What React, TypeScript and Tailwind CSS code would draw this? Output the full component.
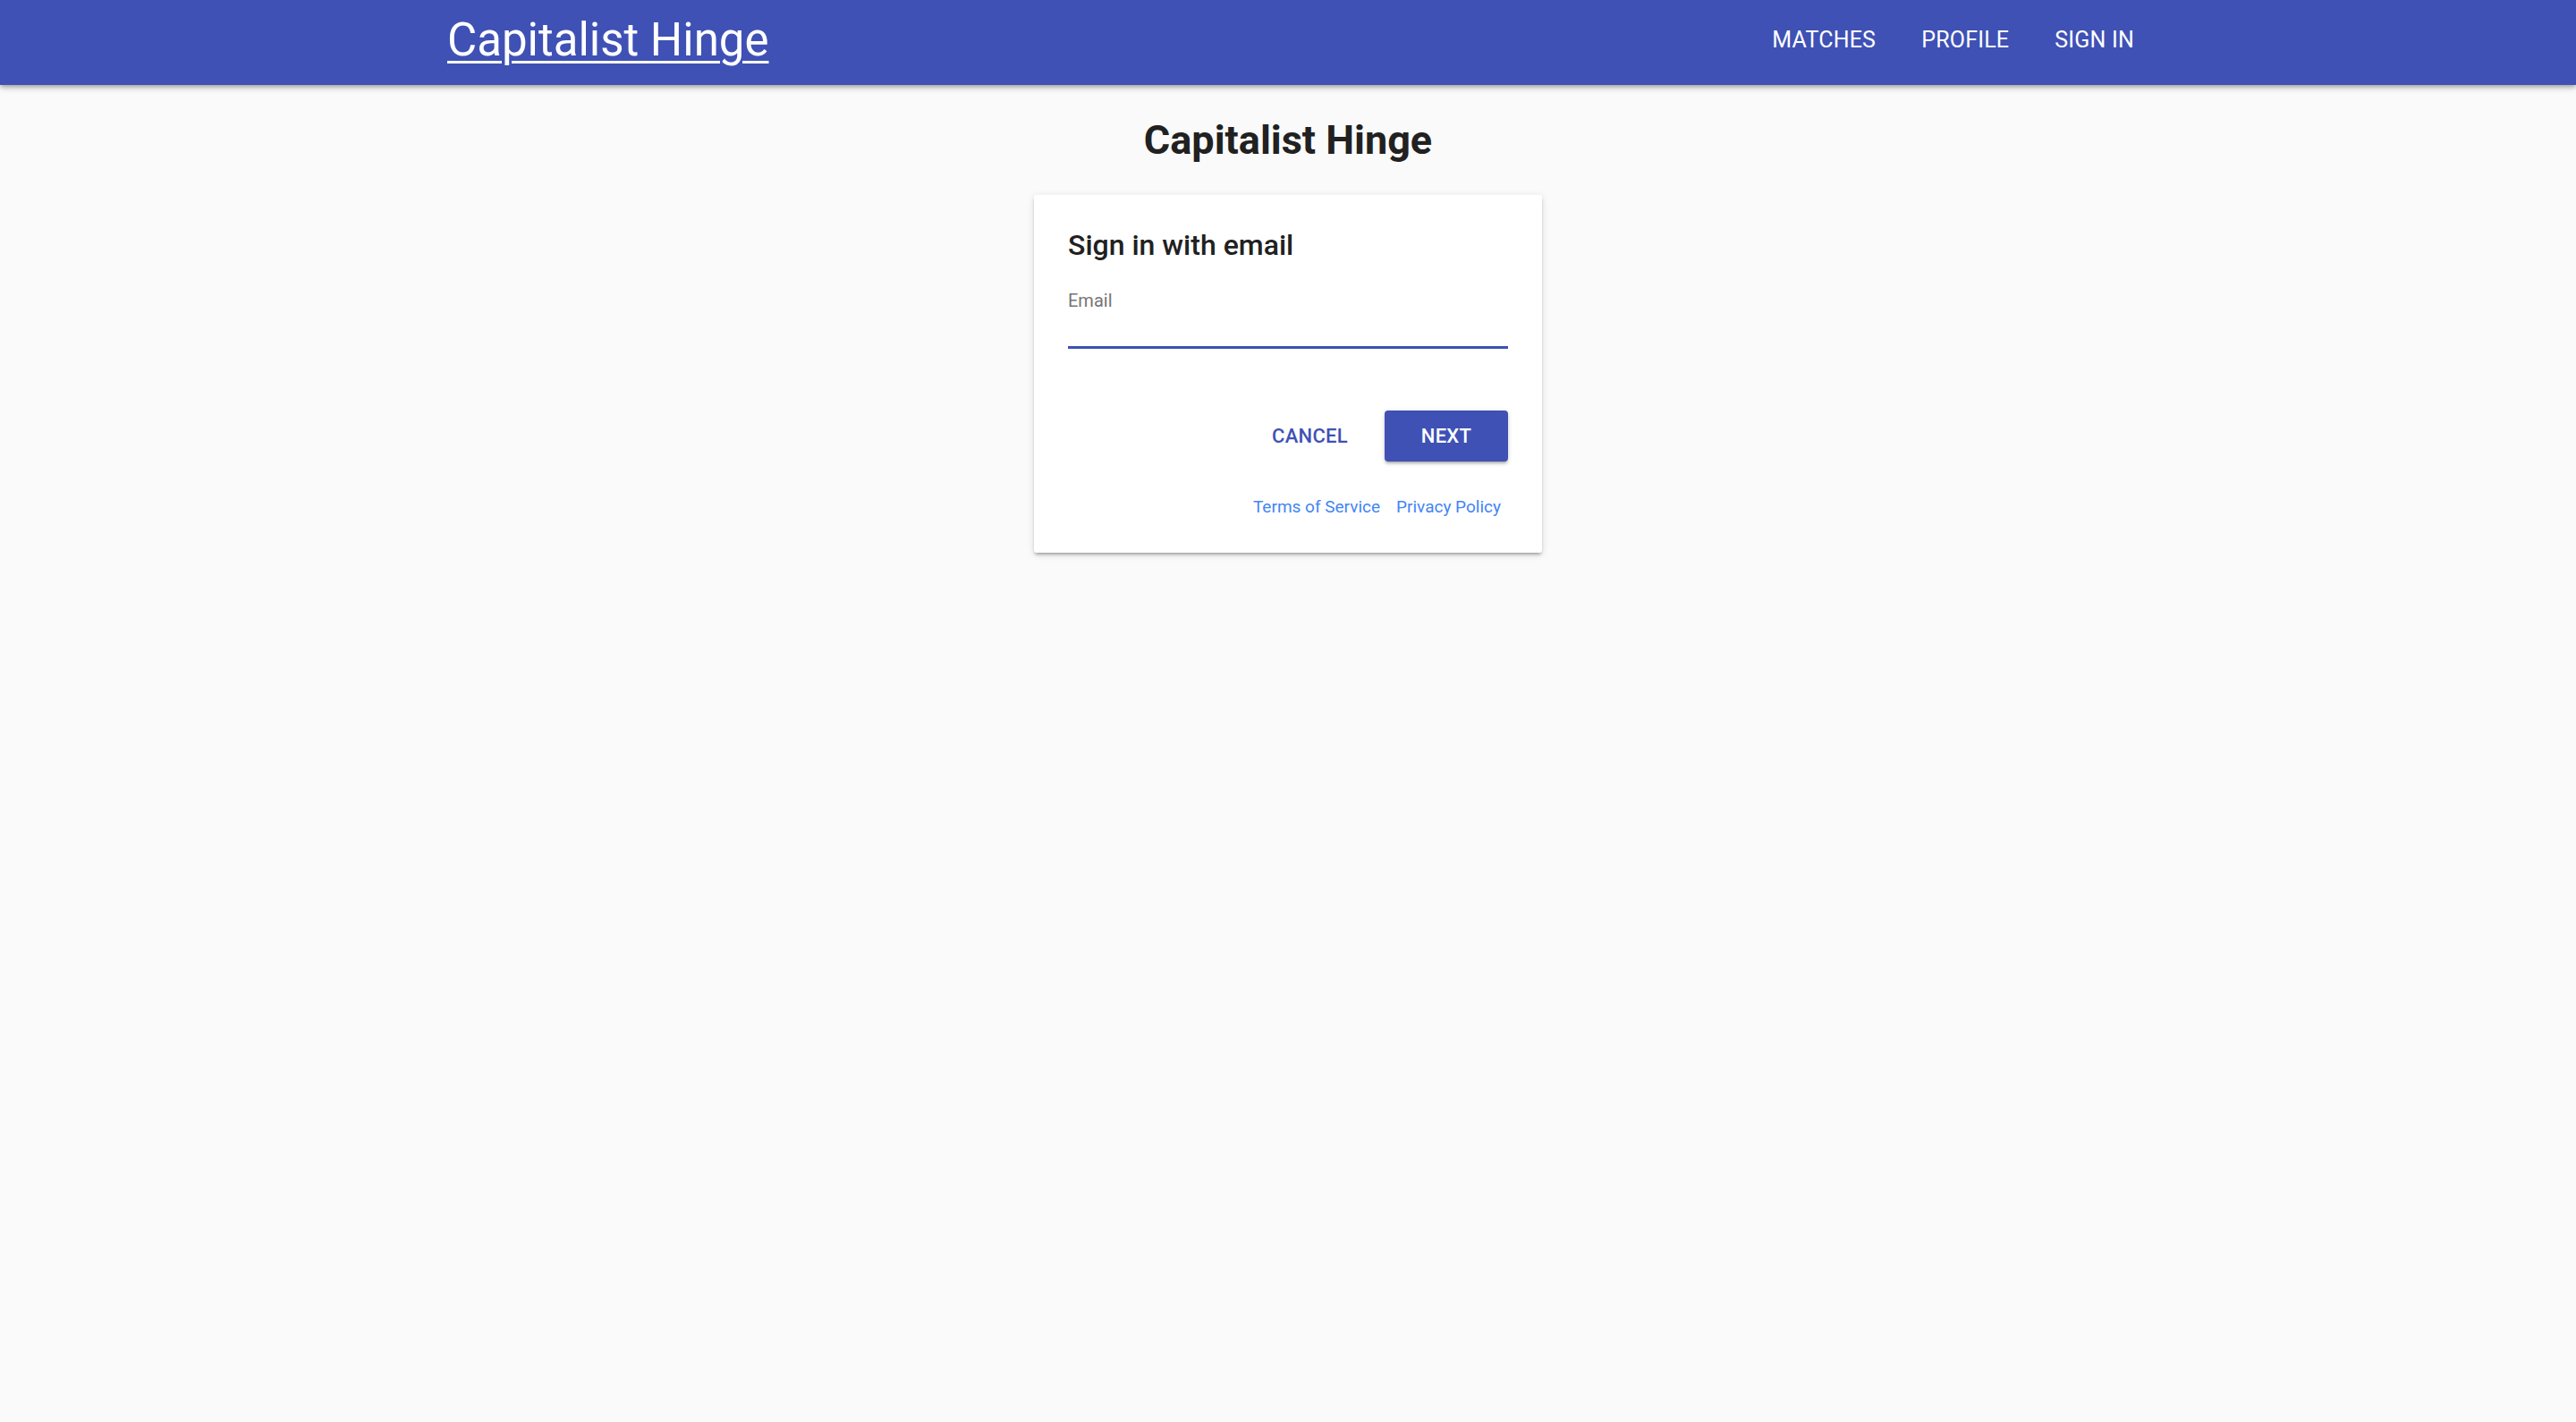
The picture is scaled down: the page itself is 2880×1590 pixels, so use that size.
import React from "react";

export default function App() {
  return (
    <div className="min-h-[1590px] bg-[#fafafa] font-['Roboto','Liberation_Sans',sans-serif] text-[#212121]">
      <header className="relative z-10 h-[95px] bg-[#3f51b5] shadow-[0_2px_4px_-1px_rgba(0,0,0,0.2),0_4px_5px_0_rgba(0,0,0,0.14),0_1px_10px_0_rgba(0,0,0,0.12)]">
        <div className="mx-auto flex h-full w-[1900px] items-center justify-between pb-[5px] pl-[10px] pr-[4px]">
          <a href="#" className="text-[51px] leading-[60px] font-normal text-white underline decoration-[3px] underline-offset-[6px]">
            Capitalist Hinge
          </a>
          <nav className="flex items-center gap-[51px] text-[25px] leading-[30px] uppercase text-white tracking-[0.2px]">
            <span>Matches</span>
            <span>Profile</span>
            <span>Sign in</span>
          </nav>
        </div>
      </header>
      <main className="flex flex-col items-center">
        <h1 className="mt-[35px] text-[45px] leading-[54px] font-bold text-[#212121]">Capitalist Hinge</h1>
        <div className="mt-[34px] w-[568px] rounded-[3px] bg-white px-[38px] pt-[36px] pb-[39px] shadow-[0_3px_3px_0_rgba(0,0,0,0.14),0_4px_2px_-3px_rgba(0,0,0,0.2),0_2px_8px_0_rgba(0,0,0,0.12)]">
          <h2 className="text-[32px] leading-[40px] font-medium text-[#212121]">Sign in with email</h2>
          <div className="mt-[30px]">
            <label className="block text-[20px] leading-[24px] text-[#757575]">Email</label>
            <div className="h-[39px]"></div>
            <div className="h-[3px] bg-[#3f51b5]"></div>
          </div>
          <div className="mt-[69px] flex items-center justify-end">
            <button className="mr-[41px] text-[22px] leading-[57px] font-medium uppercase tracking-[0.3px] text-[#3f51b5]">Cancel</button>
            <button className="h-[57px] w-[138px] rounded-[4px] bg-[#3f51b5] text-[22px] font-medium uppercase tracking-[0.3px] text-white shadow-[0_3px_3px_0_rgba(0,0,0,0.14),0_3px_2px_-2px_rgba(0,0,0,0.2),0_1px_6px_0_rgba(0,0,0,0.12)]">Next</button>
          </div>
          <div className="mt-[39px] flex justify-end gap-[18px] pr-[8px] text-[19px] leading-[24px] text-[#4285f4]">
            <a href="#">Terms of Service</a>
            <a href="#">Privacy Policy</a>
          </div>
        </div>
      </main>
    </div>
  );
}
